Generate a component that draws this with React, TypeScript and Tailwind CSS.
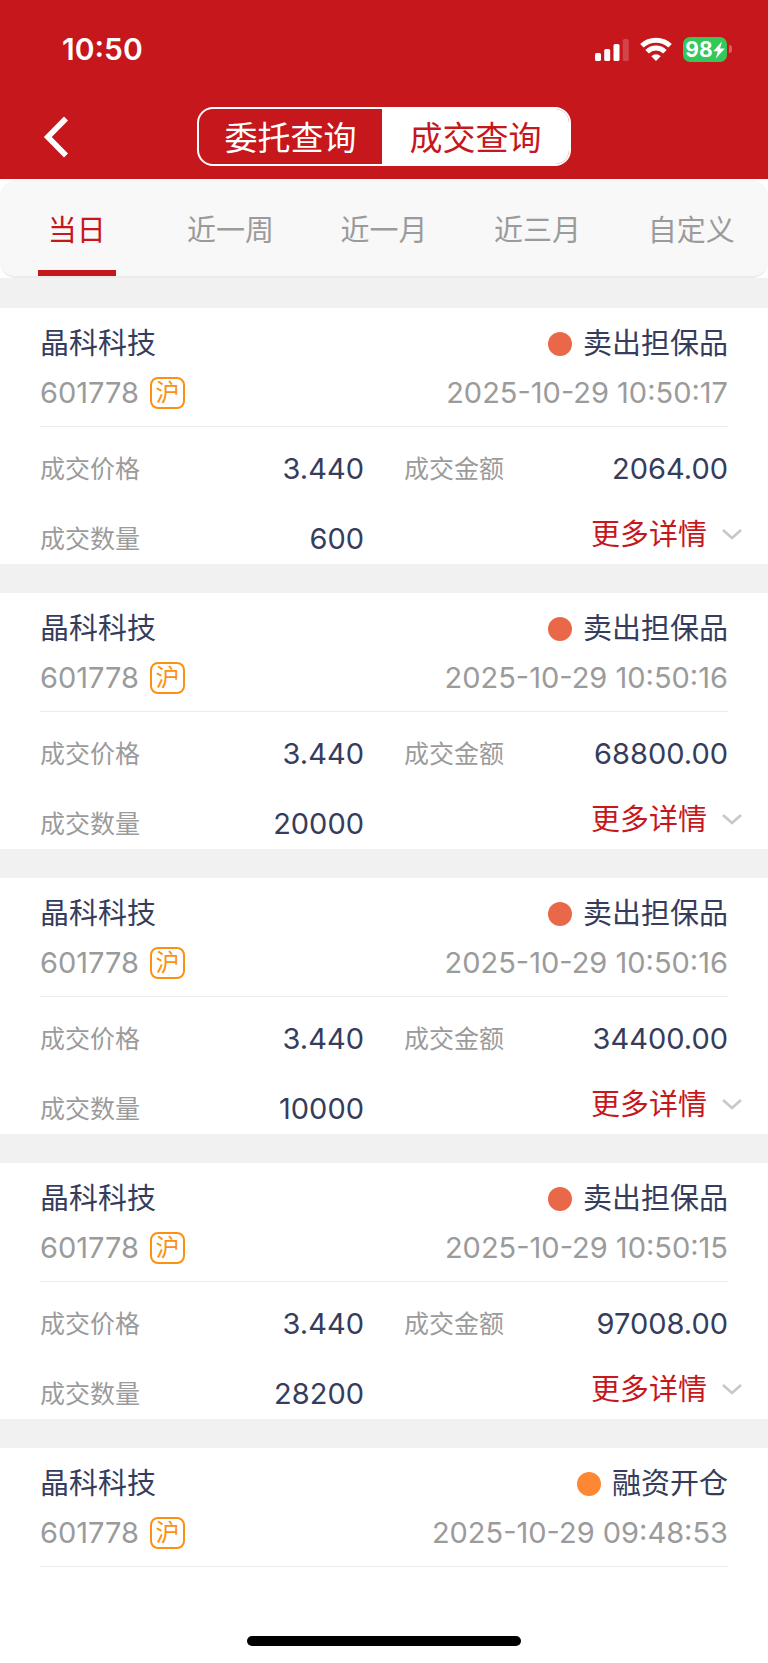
import { useState } from "react";

type Trade = {
  id: number;
  name: string;
  code: string;
  side: string;
  dot: string;
  time: string;
  price?: string;
  amount?: string;
  quantity?: string;
};

const SELL = "bg-[#e96849]";
const FINANCE = "bg-[#fd8733]";

const trades: Trade[] = [
  { id: 1, name: "晶科科技", code: "601778", side: "卖出担保品", dot: SELL, time: "2025-10-29 10:50:17", price: "3.440", amount: "2064.00", quantity: "600" },
  { id: 2, name: "晶科科技", code: "601778", side: "卖出担保品", dot: SELL, time: "2025-10-29 10:50:16", price: "3.440", amount: "68800.00", quantity: "20000" },
  { id: 3, name: "晶科科技", code: "601778", side: "卖出担保品", dot: SELL, time: "2025-10-29 10:50:16", price: "3.440", amount: "34400.00", quantity: "10000" },
  { id: 4, name: "晶科科技", code: "601778", side: "卖出担保品", dot: SELL, time: "2025-10-29 10:50:15", price: "3.440", amount: "97008.00", quantity: "28200" },
  { id: 5, name: "晶科科技", code: "601778", side: "融资开仓", dot: FINANCE, time: "2025-10-29 09:48:53" },
];

const ranges = ["当日", "近一周", "近一月", "近三月", "自定义"];
const modes = ["委托查询", "成交查询"];

function StatusBar() {
  return (
    <div className="flex h-[98px] items-center justify-between pr-9 pl-[62px] text-white">
      <span className="text-[30px] leading-10 font-semibold">10:50</span>
      <div className="flex items-center">
        <svg className="h-[23px] w-[34px]" viewBox="0 0 34 23" fill="currentColor" aria-hidden="true">
          <rect x="0" y="15" width="6" height="8" rx="1.6" />
          <rect x="9.2" y="11" width="6" height="12" rx="1.6" />
          <rect x="18.5" y="6" width="6" height="17" rx="1.6" />
          <rect x="27.8" y="1" width="6" height="22" rx="1.6" opacity="0.2" />
        </svg>
        <svg className="ml-[11px] h-6 w-8" viewBox="0 0 32 24" aria-hidden="true">
          <g fill="none" stroke="currentColor" strokeWidth="5">
            <path d="M1.9 8.8a20.4 20.4 0 0 1 28.2 0" />
            <path d="M7.1 14.7a12.8 12.8 0 0 1 17.8 0" />
          </g>
          <path fill="currentColor" d="M16 24l-4.700-4.700a6.600 6.600 0 0 1 9.400 0z" />
        </svg>
        <div className="ml-[11px] flex h-[25px] w-11 items-center justify-center rounded-[7px] bg-[#34c759] pt-px text-[21px] leading-6 font-bold">
          98
          <svg className="h-[18px] w-3" viewBox="0 0 12 18" fill="currentColor" aria-hidden="true">
            <path d="M9 0.500L0.300 10.300h4.500L2.800 17.500L11.800 7.400H7z" />
          </svg>
        </div>
        <span className="ml-[2px] h-2 w-[3px] rounded-r-full bg-white/30" />
      </div>
    </div>
  );
}

function TradeCard({ trade }: { trade: Trade }) {
  const [open, setOpen] = useState(false);
  return (
    <li className="bg-white px-10 pt-[11px]">
      <div className="flex items-center justify-between text-[29px] leading-[50px] text-[#363d5c]">
        <h2>{trade.name}</h2>
        <p className="flex items-center gap-[11px]">
          <span className={`size-6 rounded-full ${trade.dot}`} />
          {trade.side}
        </p>
      </div>
      <div className="flex items-center justify-between border-b border-[#ebebeb] pb-[10px] text-[29px] leading-[47px] text-[#9b9b9b]">
        <p className="flex items-center gap-[11px]">
          {trade.code}
          <span className="flex h-8 w-[35px] items-center justify-center rounded-lg border-2 border-[#fb9112] text-[24px] leading-7 text-[#fb9112]">
            沪
          </span>
        </p>
        <time>{trade.time}</time>
      </div>
      {trade.price && (
        <dl className="grid grid-cols-2 gap-x-10 gap-y-5 pt-[17px] text-[25px] leading-[50px] text-[#9b9b9b]">
          <div className="flex justify-between">
            <dt>成交价格</dt>
            <dd className="text-[29px] text-[#363d5c]">{trade.price}</dd>
          </div>
          <div className="flex justify-between">
            <dt>成交金额</dt>
            <dd className="text-[29px] text-[#363d5c]">{trade.amount}</dd>
          </div>
          <div className="flex justify-between">
            <dt>成交数量</dt>
            <dd className="text-[29px] text-[#363d5c]">{trade.quantity}</dd>
          </div>
          <div className="-mr-[14px] flex items-start justify-end">
            <button
              type="button"
              aria-expanded={open}
              onClick={() => setOpen(!open)}
              className="flex items-center gap-[15px] text-[29px] leading-[42px] text-[#c6171c]"
            >
              更多详情
              <svg className="h-3 w-5" viewBox="0 0 20 12" fill="none" stroke="#c7c8ce" strokeWidth="2.6" aria-hidden="true">
                <path d="M1 1L10 9L19 1" />
              </svg>
            </button>
          </div>
        </dl>
      )}
    </li>
  );
}

export default function App() {
  const [mode, setMode] = useState(1);
  const [range, setRange] = useState(0);

  return (
    <div lang="zh-CN" className="flex min-h-screen flex-col bg-white font-['Inter','Noto_Sans_CJK_SC',sans-serif]">
      <header className="bg-[#c6171c] pb-[13px]">
        <StatusBar />
        <nav className="grid grid-cols-[1fr_374px_1fr] items-center pt-[9px]">
          <button type="button" aria-label="返回" className="ml-[42px] w-7 text-white">
            <svg className="h-[42px] w-7" viewBox="0 0 28 42" fill="none" stroke="currentColor" strokeWidth="5.6" aria-hidden="true">
              <path d="M24 2.500L5.800 21L24 39.500" />
            </svg>
          </button>
          <div className="grid grid-cols-[183px_1fr] overflow-hidden rounded-2xl border-2 border-white text-[33px]">
            {modes.map((label, i) => (
              <button
                key={label}
                type="button"
                aria-pressed={mode === i}
                onClick={() => setMode(i)}
                className={`pt-[3px] leading-[52px] ${mode === i ? "bg-white text-[#c6171c]" : "text-white"}`}
              >
                {label}
              </button>
            ))}
          </div>
        </nav>
      </header>

      <div className="mt-px grid grid-cols-5 rounded-2xl border-b-2 border-[#ebebeb] bg-[#f8f8f8] text-[29px]">
        {ranges.map((label, i) => (
          <button
            key={label}
            type="button"
            aria-pressed={range === i}
            onClick={() => setRange(i)}
            className={`flex flex-col items-center gap-[10px] pt-[22px] leading-[58px] ${range === i ? "text-[#c6171c]" : "text-[#9b9b9b]"}`}
          >
            {label}
            <span className={`h-[6px] w-[78px] ${range === i ? "bg-[#c6171c]" : "bg-transparent"}`} />
          </button>
        ))}
      </div>

      <main className="flex-1">
        <ul className="flex flex-col gap-[29px] bg-[#f1f1f1] pt-[30px]">
          {trades.map((trade) => (
            <TradeCard key={trade.id} trade={trade} />
          ))}
        </ul>
      </main>

      <footer className="flex justify-center pb-[17px]">
        <span className="h-[10px] w-[274px] rounded-full bg-black" />
      </footer>
    </div>
  );
}
